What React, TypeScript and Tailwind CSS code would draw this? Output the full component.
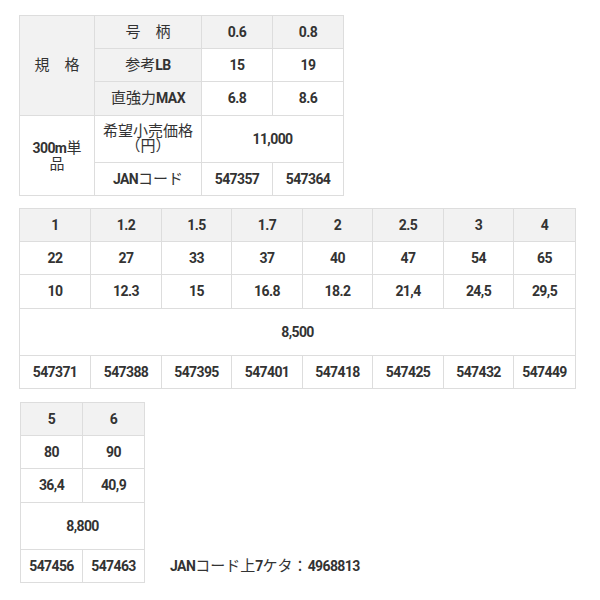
import React from "react";

const font =
  "font-['Roboto','Noto_Sans_CJK_JP',sans-serif] text-[14px] font-bold tracking-[-0.6px] text-[#333]";

function C({
  children,
  gray,
  className = "",
}: {
  children?: React.ReactNode;
  gray?: boolean;
  className?: string;
}) {
  return (
    <div
      className={`flex items-center justify-center text-center ${
        gray ? "bg-[#f2f2f2]" : "bg-white"
      } ${className}`}
    >
      <span>{children}</span>
    </div>
  );
}

const J = ({ children }: { children: React.ReactNode }) => (
  <span className="text-[15px] font-normal tracking-normal">{children}</span>
);

export default function App() {
  const t2 = [
    ["1", "1.2", "1.5", "1.7", "2", "2.5", "3", "4"],
    ["22", "27", "33", "37", "40", "47", "54", "65"],
    ["10", "12.3", "15", "16.8", "18.2", "21,4", "24,5", "29,5"],
  ];
  const jan2 = ["547371", "547388", "547395", "547401", "547418", "547425", "547432", "547449"];
  return (
    <div className={`min-h-[600px] w-[600px] bg-white pl-[19px] pt-[15px] ${font}`}>
      {/* Table 1 */}
      <div className="grid w-max grid-cols-[74px_106px_70px_70px] grid-rows-[32px_32px_33px_46px_32px] gap-px bg-[#dddddd] p-px">
        <C gray className="row-span-3">
          <J>規　格</J>
        </C>
        <C gray>
          <J>号　柄</J>
        </C>
        <C gray>0.6</C>
        <C gray>0.8</C>
        <C gray>
          <J>参考</J>LB
        </C>
        <C>15</C>
        <C>19</C>
        <C gray>
          <J>直強力</J>MAX
        </C>
        <C>6.8</C>
        <C>8.6</C>
        <C className="row-span-2 leading-[16px]">
          300m<J>単</J>
          <br />
          <J>品</J>
        </C>
        <C className="leading-[15px]">
          <J>
            希望小売価格
            <br />
            （円）
          </J>
        </C>
        <C className="col-span-2">11,000</C>
        <C>
          JAN<J>コード</J>
        </C>
        <C>547357</C>
        <C>547364</C>
      </div>

      {/* Table 2 */}
      <div className="mt-[12px] grid w-max grid-cols-[70px_70px_69px_70px_69px_70px_69px_61px] grid-rows-[32px_32px_33px_46px_32px] gap-px bg-[#dddddd] p-px">
        {t2[0].map((v) => (
          <C gray key={"a" + v}>
            {v}
          </C>
        ))}
        {t2[1].map((v) => (
          <C key={"b" + v}>{v}</C>
        ))}
        {t2[2].map((v) => (
          <C key={"c" + v}>{v}</C>
        ))}
        <C className="col-span-8">8,500</C>
        {jan2.map((v) => (
          <C key={v}>{v}</C>
        ))}
      </div>

      {/* Table 3 + note */}
      <div className="mt-[13px] flex items-end pl-px">
        <div className="grid w-max grid-cols-[61px_61px] grid-rows-[32px_32px_33px_46px_32px] gap-px bg-[#dddddd] p-px">
          <C gray>5</C>
          <C gray>6</C>
          <C>80</C>
          <C>90</C>
          <C>36,4</C>
          <C>40,9</C>
          <C className="col-span-2">8,800</C>
          <C>547456</C>
          <C>547463</C>
        </div>
        <div className="ml-[25px] flex h-[33px] items-center">
          <span>
            JAN<J>コード上</J>7<J>ケタ：</J>4968813
          </span>
        </div>
      </div>
    </div>
  );
}
